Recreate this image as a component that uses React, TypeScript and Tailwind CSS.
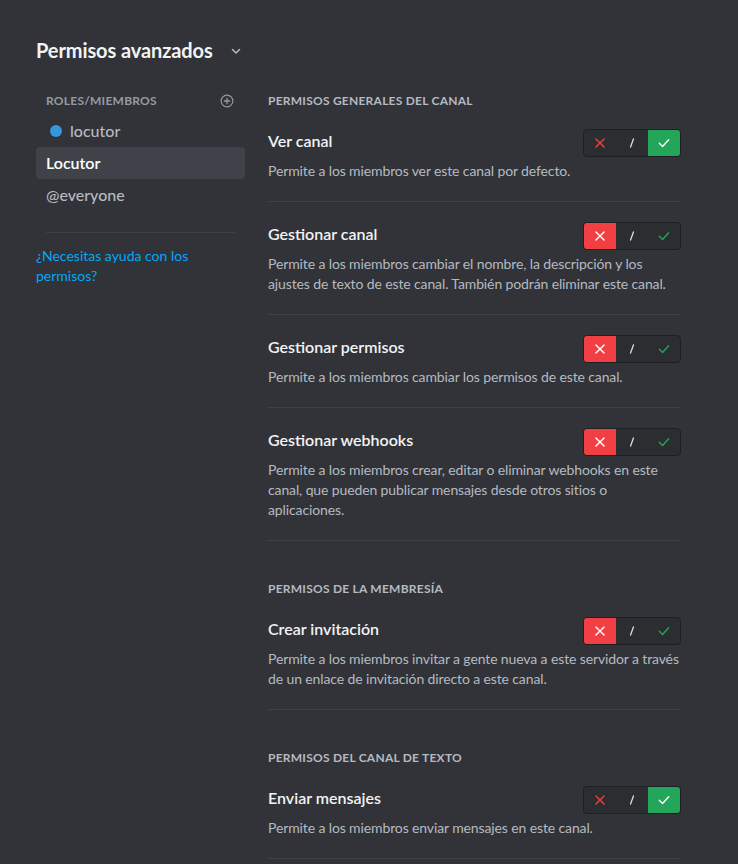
import React from "react";

type State = "deny" | "neutral" | "allow";

const XIcon = ({ color }: { color: string }) => (
  <svg width="14" height="14" viewBox="0 0 24 24" fill="none">
    <path d="M5 5L19 19M19 5L5 19" stroke={color} strokeWidth="2.4" strokeLinecap="round" />
  </svg>
);

const CheckIcon = ({ color }: { color: string }) => (
  <svg width="14" height="14" viewBox="0 0 24 24" fill="none">
    <path d="M4 12.5L9.5 18L20 6.5" stroke={color} strokeWidth="2.4" strokeLinecap="round" strokeLinejoin="round" />
  </svg>
);

function Toggle({ state }: { state: State }) {
  return (
    <div className="flex h-[28px] w-[98px] shrink-0 overflow-hidden rounded-[4px] border border-[#1e1f22] bg-[#2b2d31]">
      <div className={`flex w-[32px] items-center justify-center ${state === "deny" ? "bg-[#f23f43]" : ""}`}>
        <XIcon color={state === "deny" ? "#ffffff" : "#f23f43"} />
      </div>
      <div className="flex w-[32px] items-center justify-center">
        <svg width="14" height="14" viewBox="0 0 24 24" fill="none">
          <path d="M14.5 5L9.5 19" stroke="#dbdee1" strokeWidth="2.2" strokeLinecap="round" />
        </svg>
      </div>
      <div className={`flex flex-1 items-center justify-center ${state === "allow" ? "bg-[#23a55a]" : ""}`}>
        <CheckIcon color={state === "allow" ? "#ffffff" : "#23a55a"} />
      </div>
    </div>
  );
}

function Row({ title, desc, state }: { title: string; desc: string; state: State }) {
  return (
    <div className="border-b border-[#3f4147] pt-5 pb-5">
      <div className="flex h-[28px] items-start justify-between">
        <div className="mt-[2px] text-[16px] font-semibold leading-5 text-[#f2f3f5]">{title}</div>
        <Toggle state={state} />
      </div>
      <div className="mt-[4px] text-[14px] leading-5 tracking-[-0.12px] text-[#b5bac1]">{desc}</div>
    </div>
  );
}

function Header({ children, first }: { children: React.ReactNode; first?: boolean }) {
  return (
    <div className={`text-[12px] font-bold uppercase leading-4 tracking-[0.02em] text-[#b5bac1] ${first ? "" : "mt-10"}`}>
      {children}
    </div>
  );
}

export default function App() {
  return (
    <div
      className="min-h-[864px] w-full bg-[#313338] pl-[36px] pt-[38px]"
      style={{ fontFamily: 'Lato, "Noto Sans", sans-serif' }}
    >
      <div className="flex h-[24px] items-center">
        <h1 className="text-[20px] font-bold leading-6 tracking-[-0.1px] text-[#f2f3f5]">Permisos avanzados</h1>
        <svg className="ml-[17px] mt-[2px]" width="12" height="12" viewBox="0 0 24 24" fill="none">
          <path d="M5 9L12 16L19 9" stroke="#b5bac1" strokeWidth="3" strokeLinecap="round" strokeLinejoin="round" />
        </svg>
      </div>

      <div className="mt-[31px] flex gap-[23px]">
        <div className="w-[209px] shrink-0">
          <div className="flex h-4 items-center justify-between pl-[10px] pr-[11px]">
            <span className="text-[12px] font-bold uppercase leading-4 tracking-[0.02em] text-[#949ba4]">Roles/Miembros</span>
            <svg width="14" height="14" viewBox="0 0 24 24" fill="none">
              <circle cx="12" cy="12" r="10" stroke="#949ba4" strokeWidth="2" />
              <path d="M12 7.5V16.5M7.5 12H16.5" stroke="#949ba4" strokeWidth="2.2" strokeLinecap="round" />
            </svg>
          </div>
          <div className="mt-[6px] flex flex-col">
            <div className="flex h-[32px] items-center gap-[8px] rounded-[4px] px-[14px] text-[16px] font-medium text-[#b5bac1]">
              <span className="h-[12px] w-[12px] rounded-full bg-[#3498db]" />
              <span>locutor</span>
            </div>
            <div className="flex h-[32px] items-center rounded-[4px] bg-[#404249] px-[10px] text-[16px] font-semibold text-[#ffffff]">
              Locutor
            </div>
            <div className="flex h-[32px] items-center rounded-[4px] px-[10px] text-[16px] font-medium text-[#b5bac1]">
              @everyone
            </div>
          </div>
          <div className="mx-[10px] mt-[21px] h-px bg-[#3f4147]" />
          <div className="mt-[13px] w-[180px] text-[14px] leading-5 text-[#00a8fc]">
            ¿Necesitas ayuda con los permisos?
          </div>
        </div>

        <div className="w-[413px] shrink-0">
          <Header first>Permisos generales del canal</Header>
          <Row title="Ver canal" desc="Permite a los miembros ver este canal por defecto." state="allow" />
          <Row
            title="Gestionar canal"
            desc="Permite a los miembros cambiar el nombre, la descripción y los ajustes de texto de este canal. También podrán eliminar este canal."
            state="deny"
          />
          <Row
            title="Gestionar permisos"
            desc="Permite a los miembros cambiar los permisos de este canal."
            state="deny"
          />
          <Row
            title="Gestionar webhooks"
            desc="Permite a los miembros crear, editar o eliminar webhooks en este canal, que pueden publicar mensajes desde otros sitios o aplicaciones."
            state="deny"
          />
          <Header>Permisos de la membresía</Header>
          <Row
            title="Crear invitación"
            desc="Permite a los miembros invitar a gente nueva a este servidor a través de un enlace de invitación directo a este canal."
            state="deny"
          />
          <Header>Permisos del canal de texto</Header>
          <Row title="Enviar mensajes" desc="Permite a los miembros enviar mensajes en este canal." state="allow" />
        </div>
      </div>
    </div>
  );
}
